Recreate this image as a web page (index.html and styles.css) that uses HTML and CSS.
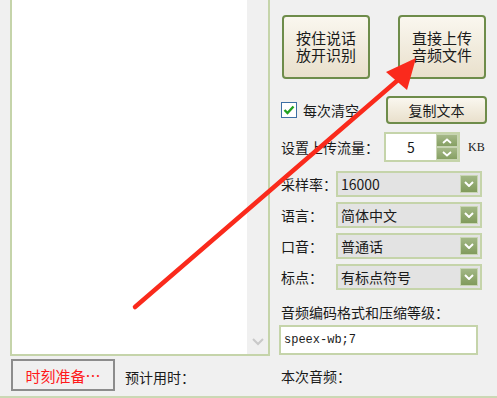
FILE: index.html
```html
<!DOCTYPE html>
<html lang="zh-CN">
<head>
  <meta charset="UTF-8">
  <title>语音识别</title>
  <link rel="stylesheet" href="styles.css">
</head>
<body>
  <div class="window">
    <div class="left">
      <div class="memo">
        <div class="memo-text"></div>
        <div class="memo-scroll">
          <svg class="scroll-arrow" width="12" height="8" viewBox="0 0 12 8"><path d="M1 1 L6 6 L11 1" fill="none" stroke="#c9c9c9" stroke-width="2"/></svg>
        </div>
      </div>
      <div class="status-row">
        <div class="status-box">时刻准备…</div>
        <span class="status-label">预计用时：</span>
      </div>
    </div>

    <div class="right">
      <div class="big-buttons">
        <button class="btn big"><span class="line">按住说话</span><span class="line">放开识别</span></button>
        <button class="btn big"><span class="line">直接上传</span><span class="line">音频文件</span></button>
      </div>

      <div class="check-row">
        <label class="check">
          <span class="check-box">
            <svg width="12" height="10" viewBox="0 0 12 10"><path d="M1.5 5 L4.5 8 L10.5 1.5" fill="none" stroke="#21a121" stroke-width="2.4"/></svg>
          </span>
          每次清空
        </label>
        <button class="btn small">复制文本</button>
      </div>

      <div class="flow-row">
        <span class="label">设置上传流量：</span>
        <div class="spin">
          <div class="spin-value">5</div>
          <div class="spin-buttons">
            <div class="spin-btn">
              <svg width="10" height="6" viewBox="0 0 10 6"><path d="M1 5 L5 1.5 L9 5" fill="none" stroke="#fff" stroke-width="1.8"/></svg>
            </div>
            <div class="spin-btn">
              <svg width="10" height="6" viewBox="0 0 10 6"><path d="M1 1 L5 4.5 L9 1" fill="none" stroke="#fff" stroke-width="1.8"/></svg>
            </div>
          </div>
        </div>
        <span class="unit">KB</span>
      </div>

      <div class="select-row">
        <span class="label short">采样率：</span>
        <div class="select"><span class="select-value">16000</span><span class="drop"><svg width="10" height="6" viewBox="0 0 10 6"><path d="M1 1 L5 5 L9 1" fill="none" stroke="#fff" stroke-width="2"/></svg></span></div>
      </div>
      <div class="select-row">
        <span class="label short">语言：</span>
        <div class="select"><span class="select-value">简体中文</span><span class="drop"><svg width="10" height="6" viewBox="0 0 10 6"><path d="M1 1 L5 5 L9 1" fill="none" stroke="#fff" stroke-width="2"/></svg></span></div>
      </div>
      <div class="select-row">
        <span class="label short">口音：</span>
        <div class="select"><span class="select-value">普通话</span><span class="drop"><svg width="10" height="6" viewBox="0 0 10 6"><path d="M1 1 L5 5 L9 1" fill="none" stroke="#fff" stroke-width="2"/></svg></span></div>
      </div>
      <div class="select-row">
        <span class="label short">标点：</span>
        <div class="select"><span class="select-value">有标点符号</span><span class="drop"><svg width="10" height="6" viewBox="0 0 10 6"><path d="M1 1 L5 5 L9 1" fill="none" stroke="#fff" stroke-width="2"/></svg></span></div>
      </div>

      <div class="codec-label">音频编码格式和压缩等级：</div>
      <div class="codec-input">speex-wb;7</div>
      <div class="audio-label">本次音频：</div>
    </div>

    <svg class="arrow" width="497" height="398" viewBox="0 0 497 398">
      <line x1="135" y1="307" x2="398" y2="80" stroke="#fa2a1c" stroke-width="4.5" stroke-linecap="round"/>
      <polygon points="416,58 386,72 407,90" fill="#fa2a1c"/>
    </svg>
  </div>
</body>
</html>
```

FILE: styles.css
```css
body {
  margin: 0;
  background: #f0f0f0;
  font-family: "Noto Sans CJK SC", "Noto Sans", sans-serif;
  font-size: 14px;
  color: #1a1a1a;
  overflow: hidden;
}

.window {
  position: relative;
  display: flex;
  width: 497px;
  height: 396px;
  border-bottom: 2px solid #cbd8b4;
}

.left {
  width: 260px;
  padding-left: 10px;
}

.memo {
  display: flex;
  height: 356px;
  border: 2px solid #c5d4aa;
  border-top: none;
  box-sizing: border-box;
}

.memo-text {
  flex: 1;
  background: #fff;
}

.memo-scroll {
  width: 21px;
  background: #f0f0f0;
  display: flex;
  align-items: flex-end;
  justify-content: center;
  padding-bottom: 8px;
  box-sizing: border-box;
}

.status-row {
  display: flex;
  align-items: center;
  margin-top: 3px;
}

.status-box {
  width: 100px;
  height: 28px;
  margin-left: 1px;
  border: 2px solid #8c8c8c;
  display: flex;
  align-items: center;
  justify-content: center;
  color: #ff1a1a;
  font-size: 15px;
}

.status-label {
  margin-left: 10px;
  margin-top: 4px;
}

.right {
  width: 227px;
  padding-left: 11px;
  box-sizing: border-box;
}

.btn {
  font-family: inherit;
  color: #1a1a1a;
  background: linear-gradient(#faf7ef, #e9e0cc);
  border: 2px solid #6e8c4a;
  border-radius: 4px;
  padding: 0;
  cursor: pointer;
}

.big-buttons {
  display: flex;
  gap: 28px;
  margin-top: 15px;
  padding-left: 1px;
}

.btn.big {
  width: 88px;
  height: 64px;
  font-size: 15px;
  display: flex;
  flex-direction: column;
  align-items: center;
  justify-content: center;
  gap: 1px;
  padding-bottom: 2px;
}

.btn.big .line {
  display: block;
  height: 16px;
  line-height: 16px;
}

.check-row {
  display: flex;
  align-items: center;
  margin-top: 17px;
  height: 28px;
}

.check {
  display: flex;
  align-items: center;
  gap: 6px;
  width: 105px;
  font-size: 14px;
}

.check-box {
  width: 14px;
  height: 14px;
  border: 1px solid #3c6fa4;
  background: #fff;
  display: flex;
  align-items: center;
  justify-content: center;
}

.btn.small {
  width: 101px;
  height: 28px;
  font-size: 14px;
}

.flow-row {
  display: flex;
  align-items: center;
  margin-top: 8px;
  height: 30px;
}

.label {
  font-size: 14px;
  white-space: nowrap;
}

.spin {
  display: flex;
  margin-left: 5px;
  width: 76px;
  height: 30px;
  border: 2px solid #c5d4aa;
  box-sizing: border-box;
}

.spin-value {
  flex: 1;
  background: #fff;
  display: flex;
  align-items: center;
  justify-content: center;
  font-size: 14px;
}

.spin-buttons {
  width: 22px;
  display: flex;
  flex-direction: column;
}

.spin-btn {
  flex: 1;
  display: flex;
  align-items: center;
  justify-content: center;
  background: linear-gradient(#a5b888, #86a063);
  border: 1px solid #c7d4b2;
}

.unit {
  margin-left: 8px;
  font-family: "Liberation Serif", serif;
  font-size: 12px;
}

.select-row {
  display: flex;
  align-items: center;
  height: 26px;
  margin-top: 5px;
}

.flow-row + .select-row {
  margin-top: 9px;
}

.label.short {
  width: 55px;
}

.select {
  display: flex;
  align-items: center;
  width: 146px;
  height: 26px;
  border: 2px solid #c5d4aa;
  background: #e3e3e3;
  box-sizing: border-box;
}

.select-value {
  flex: 1;
  padding-left: 3px;
  font-size: 14px;
}

.drop {
  width: 18px;
  height: 18px;
  margin-right: 2px;
  display: flex;
  align-items: center;
  justify-content: center;
  background: linear-gradient(#a2b785, #819b5c);
  border: 1px solid #c8d6b3;
  box-sizing: border-box;
}

.codec-label {
  margin-top: 12px;
  font-size: 14px;
  line-height: 20px;
}

.codec-input {
  width: 199px;
  height: 30px;
  margin-top: 3px;
  margin-left: -2px;
  border: 2px solid #c5d4aa;
  background: #fff;
  box-sizing: border-box;
  display: flex;
  align-items: center;
  padding-left: 3px;
  font-family: "Liberation Mono", monospace;
  font-size: 12px;
}

.audio-label {
  margin-top: 11px;
  font-size: 14px;
}

.arrow {
  position: absolute;
  left: 0;
  top: 0;
  pointer-events: none;
}
```
